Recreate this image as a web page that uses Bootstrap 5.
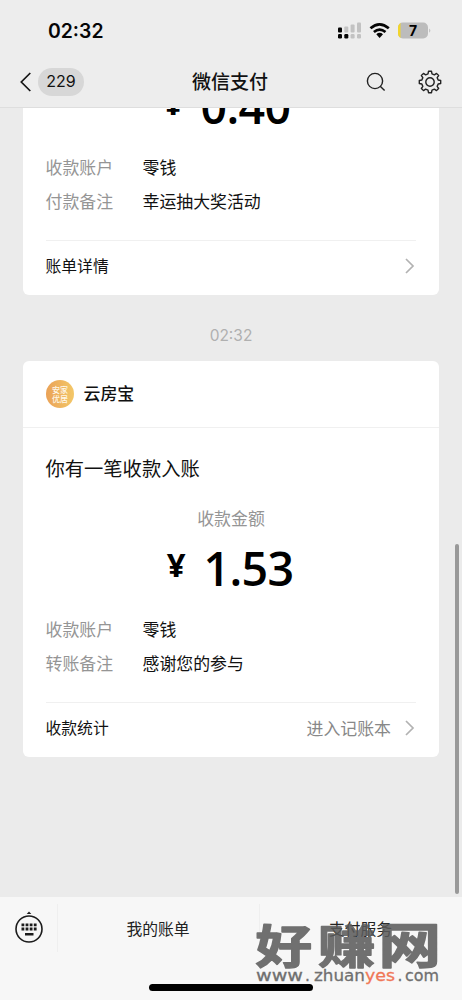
<!DOCTYPE html>
<html lang="zh-CN">
<head>
<meta charset="utf-8">
<meta name="viewport" content="width=device-width, initial-scale=1">
<title>微信支付</title>
<link href="https://cdn.jsdelivr.net/npm/bootstrap@5.3.0/dist/css/bootstrap.min.css" rel="stylesheet">
<style>
body{font-family:Inter,"Noto Sans CJK SC",sans-serif;background:#ebebeb;color:#111;height:1000px;overflow:hidden;font-size:16.9px;line-height:1.2}
.topbar{height:108px;background:#ededed;border-bottom:1px solid #dedede}
.status{height:62px;padding:0 31px 0 48px}
.clock{font-size:19.4px;font-weight:600;color:#050505;padding-top:1px}
.titlebar{height:40px;padding:0 20px 0 20px}
.unread{background:#d7d7d7;width:46px;height:28px;font-size:16px;margin-left:7px}
.page-title{font-size:19px;font-weight:500;padding:2px 2px 0 0}
.chat{height:789px;padding:0 23px}
.bill{background:#fff;border:0;border-radius:6px;width:416px;color:#111}
.bill.cut{margin-top:-26px}
.sender{height:67px;padding:0 23px 0 22.5px;border-bottom:1px solid #f0f0f0;font-weight:500}
.avatar{width:28px;height:28px}
.notice{font-size:19.3px;height:28px;line-height:28px;margin:27px 23px 0 22.5px}
.caption{height:20px;line-height:20px;margin-top:26px;color:#959595}
.amount{height:48px;color:#000;gap:18px;padding-right:2px}
.sum{font:600 46.500px/48px "Open Sans","Noto Sans",sans-serif;letter-spacing:-.7px}
.yen{font:700 33px/41px "Open Sans","Noto Sans",sans-serif}
.detail{height:34.5px;padding:1px 23px 0 22.5px}
.detail dt{width:97px;font-weight:400;color:#959595}
.detail dd{margin:0}
.bill-foot{margin:21px 23px 0 22.5px;height:55px;padding-bottom:4px;border-top:1px solid #f0f0f0;font-size:15.8px}
.bill-foot span{padding-top:2px}
.more{color:#888;font-size:16.9px}
.stamp{height:66px;padding-top:16px;color:#b0b0b0;font-size:15.5px}
.scroll-thumb{left:455px;top:544px;width:4px;height:350px;background:#999;border-radius:2px}
.bottombar{height:103px;background:#f7f7f7}
.menu{height:48px;margin-top:7px;font-size:15.8px;color:#222}
.keys{width:58px;border-right:1px solid #efefef}
.menu-item{width:202px;border-right:1px solid #efefef}
.menu-item,.menu-last{padding:4px 1px 0 0}
.watermark{left:250px;top:915px}
.home{left:149px;top:984px;width:164px;height:6.5px;background:#000;border-radius:4px}
</style>
</head>
<body class="position-relative">
<header class="topbar">
  <div class="status d-flex align-items-center justify-content-between">
    <span class="clock">02:32</span>
    <svg width="94" height="22" viewBox="337 20 94 22">
      <g fill="#050505"><rect x="338" y="27.500" width="4" height="5" rx="1"/><rect x="338" y="34" width="4" height="4.500" rx="1.200"/><rect x="344.300" y="34" width="4" height="4.500" rx="1.200"/></g>
      <g fill="#c2c2c2"><rect x="344.300" y="26.500" width="4" height="6" rx="1"/><rect x="350.600" y="24.500" width="4" height="8" rx="1"/><rect x="357" y="22.500" width="4" height="10" rx="1"/><rect x="350.600" y="34" width="4" height="4.500" rx="1.200"/><rect x="357" y="34" width="4" height="4.500" rx="1.200"/></g>
      <g fill="none" stroke="#050505" stroke-width="2.700"><path d="M370.500 28.300Q379.500 20.500 388.800 28.300"/><path d="M373.900 32Q379.600 27.200 385.500 32"/></g>
      <path d="M376.300 34.200Q379.600 31.400 383 34.200L379.600 37.900Z" fill="#050505"/>
      <clipPath id="cell"><rect x="398" y="22.500" width="30" height="16" rx="4.800"/></clipPath>
      <g clip-path="url(#cell)"><rect x="398" y="22" width="30" height="17" fill="#bcbcbc"/><rect x="398" y="22" width="2.500" height="17" fill="#f2d52c"/></g>
      <path d="M429.200 28.500Q431.500 30.600 429.200 32.800Z" fill="#bcbcbc"/>
      <text x="413" y="35.600" text-anchor="middle" font-family="Inter" font-size="14" font-weight="700">7</text>
    </svg>
  </div>
  <div class="titlebar d-flex align-items-center position-relative">
    <svg width="11" height="20" viewBox="0 0 11 20" fill="none" stroke="#151515" stroke-width="1.700"><path d="M10.300 1 1.300 10l9 9"/></svg>
    <span class="unread rounded-pill d-flex align-items-center justify-content-center">229</span>
    <h1 class="page-title m-0 position-absolute start-50 translate-middle-x">微信支付</h1>
    <svg class="ms-auto" width="20" height="20" viewBox="0 0 20 20" fill="none" stroke="#222" stroke-width="1.400"><circle cx="9" cy="9" r="7.600"/><path d="m14.200 14.200 4.400 4.400"/></svg>
    <svg style="margin-left:32px" width="24" height="24" viewBox="-12 -12 24 24" fill="none" stroke="#222" stroke-width="1.400" stroke-linejoin="round"><circle r="4.200"/><path id="gear"/></svg>
  </div>
</header>

<main class="chat overflow-hidden">
  <section class="card bill cut">
    <div class="amount d-flex justify-content-center" style="padding-right:8px"><span class="yen">¥</span><span class="sum">0.40</span></div>
    <dl class="m-0" style="padding-top:20px">
      <div class="detail d-flex align-items-center"><dt>收款账户</dt><dd>零钱</dd></div>
      <div class="detail d-flex align-items-center"><dt>付款备注</dt><dd>幸运抽大奖活动</dd></div>
    </dl>
    <div class="bill-foot d-flex align-items-center justify-content-between"><span>账单详情</span>
      <svg width="11" height="16" viewBox="0 0 11 16" fill="none" stroke="#b2b2b2" stroke-width="1.700"><path d="m1 1 7 7-7 7"/></svg></div>
  </section>

  <div class="stamp d-flex align-items-center justify-content-center">02:32</div>

  <section class="card bill">
    <div class="sender d-flex align-items-center">
      <svg class="avatar" viewBox="0 0 28 28"><defs><linearGradient id="gold" x2="1" y2="0"><stop stop-color="#eaa257"/><stop offset="1" stop-color="#f3c768"/></linearGradient></defs><circle cx="14" cy="14" r="14" fill="url(#gold)"/><g fill="#fff7e8" font-family="Noto Sans CJK SC" font-size="8" text-anchor="middle"><text x="14" y="13">安家</text><text x="14" y="21.500">优居</text></g></svg>
      <span style="margin-left:10px">云房宝</span>
    </div>
    <div class="notice">你有一笔收款入账</div>
    <div class="caption text-center">收款金额</div>
    <div class="amount d-flex justify-content-center" style="margin-top:15px"><span class="yen">¥</span><span class="sum">1.53</span></div>
    <dl class="m-0" style="padding-top:20px">
      <div class="detail d-flex align-items-center"><dt>收款账户</dt><dd>零钱</dd></div>
      <div class="detail d-flex align-items-center"><dt>转账备注</dt><dd>感谢您的参与</dd></div>
    </dl>
    <div class="bill-foot d-flex align-items-center"><span>收款统计</span><span class="more ms-auto">进入记账本</span>
      <svg style="margin-left:14px" width="11" height="16" viewBox="0 0 11 16" fill="none" stroke="#b2b2b2" stroke-width="1.700"><path d="m1 1 7 7-7 7"/></svg></div>
  </section>
</main>
<div class="scroll-thumb position-absolute"></div>

<footer class="bottombar d-flex align-items-start">
  <nav class="menu d-flex w-100">
    <div class="keys d-flex align-items-center justify-content-center">
      <svg width="30" height="34" viewBox="0 0 30 34"><circle cx="15" cy="18" r="13" fill="none" stroke="#1c1c1c" stroke-width="1.600"/><path d="M12.700 3 15 .5 17.300 3z" fill="#1c1c1c"/><path fill="#1c1c1c" d="M7.500 12.500h2.800v2.800H7.500zm4.100 0h2.800v2.800h-2.800zm4.100 0h2.800v2.800h-2.800zm4.100 0h2.800v2.800h-2.800zM7.500 16.600h2.800v2.800H7.500zm4.100 0h2.800v2.800h-2.800zm4.100 0h2.800v2.800h-2.800zm4.100 0h2.800v2.800h-2.800zM11 22h8.500v2.500H11z"/></svg>
    </div>
    <div class="menu-item d-flex align-items-center justify-content-center">我的账单</div>
    <div class="menu-last flex-fill d-flex align-items-center justify-content-center">支付服务</div>
  </nav>
</footer>
<svg class="watermark position-absolute" width="195" height="75" viewBox="250 915 195 75">
  <g fill="#5a5a5a" opacity=".86">
    <g font-family="Noto Sans CJK SC" font-weight="700" font-size="50" stroke="#5a5a5a" stroke-width="1.500" stroke-linejoin="round">
      <text transform="translate(255.500 962.500) scale(1.130 .920)">好</text>
      <text transform="translate(318 962.500) scale(1.150 .920)">赚</text>
      <text transform="translate(378.500 962.500) scale(1.250 .960)">网</text>
    </g>
    <g font-family="DejaVu Sans" font-size="15.500" stroke="#5a5a5a" stroke-width=".3">
      <text x="256" y="981" textLength="47" lengthAdjust="spacingAndGlyphs">www</text><text x="305" y="981">.</text>
      <text x="314" y="981" textLength="51" lengthAdjust="spacingAndGlyphs">zhuan</text>
      <text x="365" y="981" textLength="30" lengthAdjust="spacingAndGlyphs" fill="#f0633c" stroke="#f0633c">yes</text><text x="397.500" y="981">.</text>
      <text x="405" y="981" textLength="34" lengthAdjust="spacingAndGlyphs">com</text>
    </g>
  </g>
</svg>
<div class="home position-absolute"></div>
<script>
// Eight-tooth gear outline around the origin
let points = [];
for (let i = 0; i < 8; i++) {
  for (const [offset, radius] of [[-.24, 8.4], [-.14, 10.8], [.14, 10.8], [.24, 8.4]]) {
    const a = i * Math.PI / 4 + offset;
    points.push((Math.cos(a) * radius).toFixed(2) + ' ' + (Math.sin(a) * radius).toFixed(2));
  }
}
document.getElementById('gear').setAttribute('d', 'M' + points.join('L') + 'Z');
</script>
<script src="https://cdn.jsdelivr.net/npm/bootstrap@5.3.0/dist/js/bootstrap.bundle.min.js"></script>
</body>
</html>
